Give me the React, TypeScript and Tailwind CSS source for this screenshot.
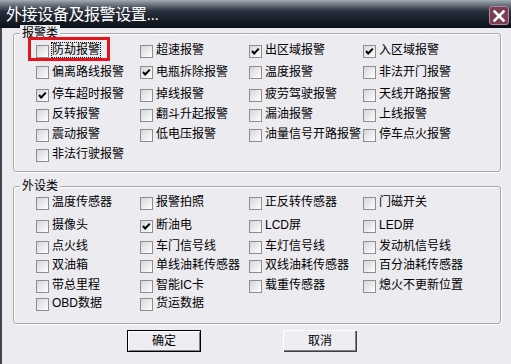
import React from "react"

type Item = { label: string; checked?: boolean; focus?: boolean }

const alarmRows: { items: Item[]; gap: string }[] = [
    { gap: "", items: [ { label: "防劫报警", focus: true }, { label: "超速报警" }, { label: "出区域报警", checked: true }, { label: "入区域报警", checked: true } ] },
    { gap: "mt-[1.5px]", items: [ { label: "偏离路线报警" }, { label: "电瓶拆除报警", checked: true }, { label: "温度报警" }, { label: "非法开门报警" } ] },
    { gap: "mt-[2.5px]", items: [ { label: "停车超时报警", checked: true }, { label: "掉线报警" }, { label: "疲劳驾驶报警" }, { label: "天线开路报警" } ] },
    { gap: "", items: [ { label: "反转报警" }, { label: "翻斗升起报警" }, { label: "漏油报警" }, { label: "上线报警" } ] },
    { gap: "", items: [ { label: "震动报警" }, { label: "低电压报警" }, { label: "油量信号开路报警" }, { label: "停车点火报警" } ] },
    { gap: "", items: [ { label: "非法行驶报警" } ] },
]

const deviceRows: { items: Item[]; gap: string }[] = [
    { gap: "", items: [ { label: "温度传感器" }, { label: "报警拍照" }, { label: "正反转传感器" }, { label: "门磁开关" } ] },
    { gap: "mt-[3px]", items: [ { label: "摄像头" }, { label: "断油电", checked: true }, { label: "LCD屏" }, { label: "LED屏" } ] },
    { gap: "mt-[1px]", items: [ { label: "点火线" }, { label: "车门信号线" }, { label: "车灯信号线" }, { label: "发动机信号线" } ] },
    { gap: "-mt-[1px]", items: [ { label: "双油箱" }, { label: "单线油耗传感器" }, { label: "双线油耗传感器" }, { label: "百分油耗传感器" } ] },
    { gap: "", items: [ { label: "带总里程" }, { label: "智能IC卡" }, { label: "载重传感器" }, { label: "熄火不更新位置" } ] },
    { gap: "-mt-[2px]", items: [ { label: "OBD数据" }, { label: "货运数据" } ] },
]

const colWidths = [ "w-[104px]", "w-[109px]", "w-[114px]", "w-[140px]" ]

const CheckBox = ({ checked }: { checked?: boolean }) => {
    return (
        <span className="w-[13px] h-[13px] shrink-0 border border-[#8d8e92] bg-linear-to-br from-[#d6d6da] to-white flex items-center justify-center">
            {checked && (
                <svg width="11" height="11" viewBox="0 0 11 11">
                    <polyline points="2,5 4.2,7.5 8.8,2.6" fill="none" stroke="#000" strokeWidth="2" />
                </svg>
            )}
        </span>
    )
}

const Option = ({ item, width }: { item: Item; width: string }) => {
    return (
        <div className={`${width} shrink-0 flex items-center`}>
            <CheckBox checked={item.checked} />
            <span className={`ml-[3px] -mt-[2px] whitespace-nowrap leading-[14px] ${item.focus ? "outline outline-dotted outline-1 outline-black" : ""}`}>{item.label}</span>
        </div>
    )
}

const GroupBox = ({ title, rows, className }: { title: string; rows: { items: Item[]; gap: string }[]; className: string }) => {
    return (
        <div className={`relative border border-[#a9a8ae] rounded-[3px] shadow-[inset_1px_1px_0_#ffffff,1px_1px_0_#ffffff] pl-[22px] ${className}`}>
            <span className="absolute left-[6px] -top-[9px] px-[2px] bg-[#ecebf0] leading-[16px] text-[12px]">{title}</span>
            {rows.map((row, r) => (
                <div key={r} className={`h-[20px] flex ${row.gap}`}>
                    {row.items.map((item, i) => <Option key={i} item={item} width={colWidths[i]} />)}
                </div>
            ))}
        </div>
    )
}

const DialogButton = ({ label, primary }: { label: string; primary?: boolean }) => {
    return (
        <button className={`w-[74px] h-[22px] text-[12px] bg-[#eeedf1] flex items-center justify-center ${primary ? "border border-black shadow-[inset_1px_1px_0_#ffffff,inset_-1px_-1px_0_#808080]" : "shadow-[inset_1px_1px_0_#ffffff,inset_-1px_-1px_0_#404040,inset_-2px_-2px_0_#808080]"}`}>
            <span className="-mt-[1px]">{label}</span>
        </button>
    )
}

export default function App() {
    return (
        <div className="relative w-[511px] h-[364px] overflow-hidden bg-[#ecebf0] text-[12px] text-black font-['Liberation_Sans','Noto_Sans_CJK_SC',sans-serif]">
            <div className="h-[28px] flex items-start justify-between pl-[6px] pr-[2px] bg-linear-to-b from-[#a3abb4] via-[#27303c] via-40% to-[#0b1018]">
                <span className="mt-[5px] text-white text-[16px] leading-[20px] tracking-[-0.4px]">外接设备及报警设置...</span>
                <div className="mt-[6px] w-[20px] h-[19px] rounded-[3px] border border-[#b08a9a] bg-[#7b3c55] flex items-center justify-center">
                    <svg width="12" height="12" viewBox="0 0 12 12">
                        <path d="M1.5 1.5 L10.5 10.5 M10.5 1.5 L1.5 10.5" stroke="#fff" strokeWidth="2.6" strokeLinecap="square" />
                    </svg>
                </div>
            </div>
            <div className="h-[336px] border-l-2 border-[#3f4654] pl-[11px] pr-[10px] pt-[5px]">
                <GroupBox title="报警类" rows={alarmRows} className="h-[139px] pt-[7px]" />
                <GroupBox title="外设类" rows={deviceRows} className="h-[138px] mt-[14px] pt-[6px]" />
                <div className="flex mt-[6px] pl-[114px] gap-[82px]">
                    <DialogButton label="确定" primary />
                    <DialogButton label="取消" />
                </div>
            </div>
            <div className="absolute left-[28px] top-[37px] w-[82px] h-[24px] border-[3px] border-[#e3141c]" />
        </div>
    )
}
